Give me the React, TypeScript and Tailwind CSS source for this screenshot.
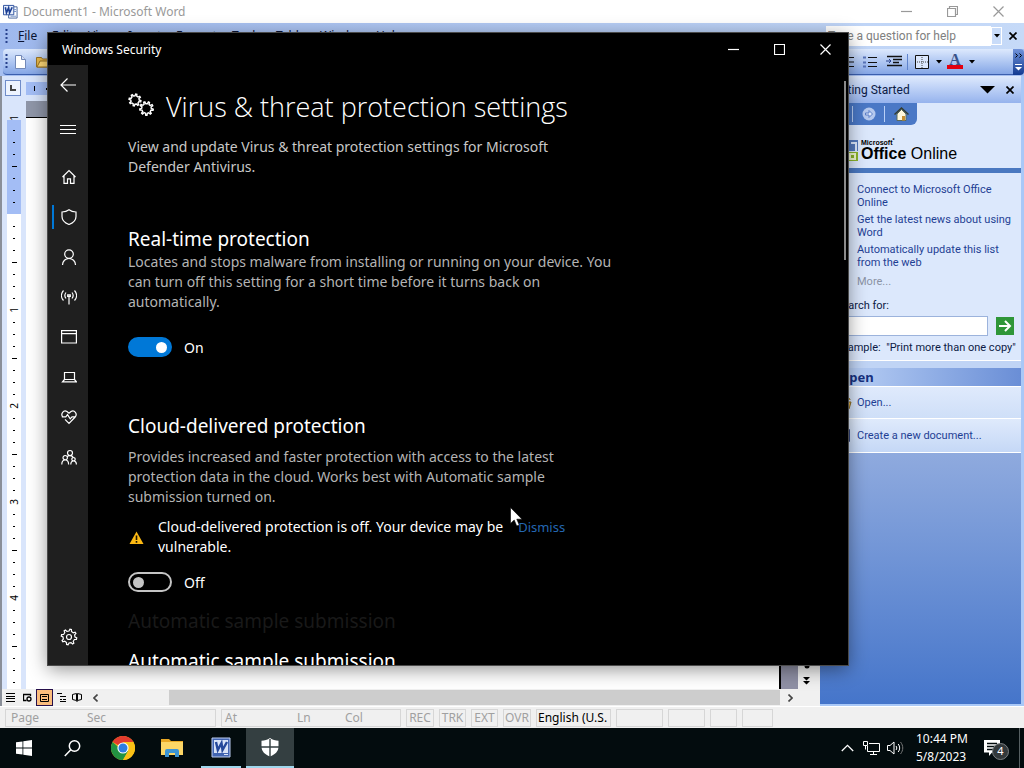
import React from 'react';

const strokeProps = { fill: 'none', stroke: 'currentColor', strokeWidth: 1.2 };

const gearPath = (cx: number, cy: number, inner: number, outer: number, teeth: number) => {
  const points: string[] = [];
  for (let i = 0; i < teeth; i++) {
    const steps: [number, number][] = [[0, inner], [0.15, outer], [0.4, outer], [0.55, inner]];
    steps.forEach(([offset, radius]) => {
      const a = ((i + offset) / teeth) * Math.PI * 2;
      points.push(`${(cx + Math.cos(a) * radius).toFixed(2)} ${(cy + Math.sin(a) * radius).toFixed(2)}`);
    });
  }
  return `M${points.join('L')}Z`;
};

const WordIcon: React.FC<{ size: number }> = ({ size }) => (
  <svg width={size} height={size} viewBox="0 0 16 16">
    <path d="M6 3h9v12H6z" fill="#fff" stroke="#44629c" />
    <path d="M12 6h2M12 8h2M8 13h6" stroke="#6d8dc8" />
    <path d="M.5 1.5h11v10H.5z" fill="#e9f0fc" stroke="#2b4f9e" />
    <path d="M2.5 3.5l1.2 6 2.3-5.5 1 5.5 2.8-6" fill="none" stroke="#1c3f94" strokeWidth="1.7" />
  </svg>
);

const TaskWordIcon = () => (
  <svg width="20" height="21" viewBox="0 0 20 21">
    <path d="M1 1h18v19H1z" fill="#4265b2" stroke="#bcccf0" />
    <path d="M3 3h14v13H3z" fill="#d9e3f8" />
    <path d="M5 5l1.8 8L10.500 6l1 7L16 5" fill="none" stroke="#25489b" strokeWidth="2.400" />
    <path d="M13 17.500h4" stroke="#dce6fa" />
  </svg>
);

const navItems = [
  {
    label: 'Home',
    icon: <path d="M1.500 8L8 1.600 14.500 8M3 7v7.400h3.500v-4.600h3v4.600H13V7" />,
  },
  {
    label: 'Virus & threat protection',
    icon: <path d="M8 .8C6 2.400 3.500 3 1 3v4.500c0 4 3 6.500 7 8 4-1.500 7-4 7-8V3c-2.500 0-5-.6-7-2.200z" />,
  },
  {
    label: 'Account protection',
    icon: <path d="M8 .8a4.300 4.300 0 100 8.600A4.300 4.300 0 008 .8zM1.500 16c0-4 3-6.500 6.500-6.500s6.500 2.500 6.500 6.500" />,
  },
  {
    label: 'Firewall & network protection',
    icon: <path d="M8 7v8.500M6.700 5.800h2.600v1.500H6.700zM5 3.500c-1.400 1.800-1.400 4.200 0 6M11 3.500c1.400 1.800 1.400 4.200 0 6M2.500 1.500c-2.700 3-2.700 7 0 10M13.500 1.500c2.700 3 2.700 7 0 10" />,
  },
  {
    label: 'App & browser control',
    icon: <path d="M.6 1.700h14.800v12.300H.6zM.6 4.700h14.800" />,
  },
  {
    label: 'Device security',
    icon: <path d="M3.500 3.500h10v7h-10zM3.500 10.500L1.500 12.800h14l-2-2.300" />,
  },
  {
    label: 'Device performance & health',
    icon: <path d="M1.800 8C-.8 4.600 2.600.6 6 2.500L8 4.200l2-1.700C13.400.6 16.800 4.600 14.200 8L8 14.500 4 10.400M.8 7.800h4L6.500 5.600l2.700 4.200 1.800-2h3.600" />,
  },
  {
    label: 'Family options',
    icon: (
      <path d="M9 1.500a2.500 2.500 0 100 5 2.500 2.500 0 000-5zM4.200 6.500a2.200 2.200 0 100 4.400 2.200 2.200 0 000-4.400zM12.500 8.500a1.700 1.700 0 100 3.400 1.700 1.700 0 000-3.400zM.8 15.500c0-6 6.800-6 6.800 0M9.800 15.500c0-4.700 5.600-4.700 5.600 0M6 8C6.600 6.400 11 5.600 12.300 8.500" />
    ),
  },
];

// one inch is eight 12px steps, the zero sits at the ninth
const rulerSteps = Array.from({ length: 48 }, (_, i) => i);

const menus = [
  { name: 'Edit', width: 'w-9' },
  { name: 'View', width: 'w-10' },
  { name: 'Insert', width: 'w-12' },
  { name: 'Format', width: 'w-14' },
  { name: 'Tools', width: 'w-11' },
  { name: 'Table', width: 'w-11' },
  { name: 'Window', width: 'w-14' },
  { name: 'Help', width: 'w-10' },
];

const Grip = () => (
  <svg width="3" height="15" viewBox="0 0 3 15" className="shrink-0">
    <path d="M1.500 0v15" stroke="#27408b" strokeWidth="2" strokeDasharray="2 2" />
  </svg>
);

const DownArrow = () => (
  <svg width="6" height="4" viewBox="0 0 6 4">
    <path d="M0 0h6L3 3.500z" fill="#000" />
  </svg>
);

const WordTitleBar = () => (
  <header className="flex h-[23px] items-center bg-white pl-[3px] text-[#999]">
    <WordIcon size={15} />
    <h1 className="ml-[5px] text-xs">Document1 - Microsoft Word</h1>
    <div className="ml-auto flex pr-[3px]">
      <button aria-label="Minimize Word" className="flex w-[46px] justify-center">
        <svg width="11" height="11" {...strokeProps}><path d="M0 5.500h11" /></svg>
      </button>
      <button aria-label="Restore Word" className="flex w-[46px] justify-center">
        <svg width="11" height="11" {...strokeProps}><path d="M.5 2.500h8v8h-8zM2.500 2.500v-2h8v8h-2" /></svg>
      </button>
      <button aria-label="Close Word" className="flex w-[46px] justify-center">
        <svg width="11" height="11" {...strokeProps}><path d="M.5.5l10 10M10.500.5l-10 10" /></svg>
      </button>
    </div>
  </header>
);

const WordMenuBar = () => (
  <nav className="flex h-[26px] items-center bg-linear-to-r from-[#9fb9ee] to-[#c6daf8] pl-[5px] text-xs text-[#0a1433]">
    <Grip />
    <button className="ml-[10px] w-[34px] text-left"><u>F</u>ile</button>
    {menus.map((menu) => (
      <button key={menu.name} className={`text-left ${menu.width}`}>{menu.name}</button>
    ))}
    <div className="ml-auto flex h-5 items-center">
      <input
        aria-label="Type a question for help"
        placeholder="Type a question for help"
        className="h-full w-[165px] bg-white pl-[2px] font-['Roboto'] text-xs placeholder:text-[#808080]"
      />
      <button aria-label="Recent questions" className="flex h-[18px] w-[11px] items-center justify-center border border-white bg-[#c9dcf9]">
        <DownArrow />
      </button>
      <button aria-label="Close document" className="flex w-[22px] justify-center">
        <svg width="8" height="8"><path d="M.5.5l7 7M7.500.5l-7 7" stroke="#000" strokeWidth="1.700" /></svg>
      </button>
    </div>
  </nav>
);

const WordToolbar = () => (
  <div className="flex h-[27px] bg-[#a6bff0] pl-[3px]">
    <div className="flex h-[26px] flex-1 items-center rounded-l border-b border-[#3b5fae] bg-linear-to-b from-[#dde9fd] to-[#85a6e6] pl-[2px]">
      <Grip />
      <button aria-label="New blank document" className="ml-[7px]">
        <svg width="11" height="14"><path d="M.5.5h6l4 4v9H.5z" fill="#fff" stroke="#7289b8" /><path d="M6.500.5v4h4" fill="#d4def2" stroke="#7289b8" /></svg>
      </button>
      <button aria-label="Open file" className="ml-[10px]">
        <svg width="16" height="13"><path d="M.5 12V2.500h5l1 1.500h6v8z" fill="#e8b84a" stroke="#9a7424" /><path d="M1 12l3-6h11l-3 6z" fill="#ffd977" stroke="#9a7424" /></svg>
      </button>
      <div className="ml-auto flex items-center pr-[38px]">
        <button aria-label="Numbering" className="mr-[9px]">
          <svg width="14" height="12"><path d="M5 1.500h9M5 6h9M5 10.500h9" stroke="#111" /><path d="M1.500 0v3M1.500 4.500v3M1.500 9v3" stroke="#27408b" /></svg>
        </button>
        <button aria-label="Bullets" className="mr-[9px]">
          <svg width="14" height="12"><path d="M5 1.500h9M5 6.500h9M5 10.500h9" stroke="#111" /><path d="M0 1.500h3M0 6.500h3M0 10.500h3" stroke="#5873b8" strokeWidth="2" /></svg>
        </button>
        <button aria-label="Increase indent" className="mr-[5px]">
          <svg width="16" height="13"><path d="M1 1.500h15M7 4.500h9M7 7.500h6M1 10.500h15" stroke="#111" strokeWidth="1.500" /><path d="M0 6h4M3 4l2 2-2 2" fill="none" stroke="#27408b" /></svg>
        </button>
        <span className="mr-[7px] h-4 w-px bg-[#5f83cc]" />
        <button aria-label="Borders" className="mr-[7px]">
          <svg width="14" height="14"><path d="M.5.5h13v13H.5z" fill="#dbe7fc" stroke="#111" /><path d="M7 2v11M2 7h11" stroke="#444" strokeDasharray="1 1" /></svg>
        </button>
        <DownArrow />
        <button aria-label="Font color" className="mr-[6px] ml-[5px] flex flex-col items-center">
          <b className="font-['Liberation_Serif'] text-base leading-[11px] text-[#3a5289]">A</b>
          <span className="h-1 w-4 bg-[#e3000f]" />
        </button>
        <DownArrow />
      </div>
    </div>
    <button aria-label="Toolbar options" className="flex h-[26px] w-[11px] flex-col items-center justify-between rounded-r bg-linear-to-b from-[#7193da] to-[#123a91] py-1">
      <svg width="8" height="5"><path d="M.5.5l2 2-2 2M4.500.5l2 2-2 2" fill="none" stroke="#000" /></svg>
      <svg width="7" height="7"><path d="M0 .5h7" stroke="#fff" /><path d="M0 3h7L3.500 6.500z" fill="#fff" /></svg>
    </button>
  </div>
);

const Document = () => (
  <section className="flex min-w-0 flex-1 flex-col border-l-2 border-[#8a8f99]">
    <div className="flex min-h-0 flex-1">
      <div className="flex w-6 flex-col bg-[#d9e5fb] pl-[3px]">
        <button aria-label="Left tab" className="mt-1 flex size-4 shrink-0 items-center justify-center border border-[#6f8cc9] bg-[#eef4ff]">
          <svg width="6" height="6"><path d="M1 0v5h5" fill="none" stroke="#444" strokeWidth="2" /></svg>
        </button>
        <div className="mt-4 ml-[2px] w-[14px] flex-1 overflow-hidden bg-[linear-gradient(#d9e5fb_8px,#a3bdf5_8px,#a3bdf5_102px,#fff_102px)]">
          {rulerSteps.map((step) => (
            <div key={step} className="flex h-3 items-center justify-center text-[10px] leading-3 text-black">
              {step % 8 === 0 && step !== 8 && (
                <span className="rotate-180 [writing-mode:vertical-rl]">{Math.abs(step / 8 - 1)}</span>
              )}
              {step % 8 === 4 && <span className="h-px w-[5px] bg-black" />}
              {step % 4 !== 0 && <span className="h-px w-[2px] bg-black" />}
            </div>
          ))}
        </div>
      </div>
      <div className="flex min-w-0 flex-1 flex-col">
        <div className="flex h-[25px] items-center gap-[11px] bg-[#d9e5fb]">
          <div className="flex h-[13px] flex-1 items-center gap-[11px] bg-[#a3bdf5] pl-2">
            <span className="h-[5px] w-px bg-black" />
            <span className="size-[2px] bg-black" />
          </div>
        </div>
        <div className="h-[17px] border-b border-black bg-[#8f96a8]" />
        <div className="flex flex-1">
          <div className="flex-1 border-r-2 border-black bg-white" />
          <div className="w-[17px] bg-[#8f90a5]" />
        </div>
      </div>
      <div className="flex w-[22px] flex-col items-center justify-end gap-2 bg-[#f0f0f0] pr-[5px] pb-1">
        <svg width="6" height="6"><circle cx="3" cy="3" r="2.500" fill="#000" /></svg>
        <svg width="7" height="8"><path d="M0 0h7L3.500 3.500zM0 4h7L3.500 7.500z" fill="#000" /></svg>
      </div>
    </div>
    <div className="flex h-[17px] items-center bg-[#f0f0f0]">
      <button aria-label="Normal view" className="flex w-4 justify-center">
        <svg width="9" height="9"><path d="M0 .5h9M0 3.500h9M0 5.500h9M0 8.500h9" stroke="#000" /></svg>
      </button>
      <button aria-label="Web layout view" className="flex w-[18px] justify-center">
        <svg width="9" height="9" fill="none" stroke="#000" strokeWidth="1.300"><path d="M7.500 3V1.500h-7v6h3" /><circle cx="6" cy="6" r="2" /></svg>
      </button>
      <button aria-label="Print layout view" className="flex size-[17px] items-center justify-center border border-[#27104b] bg-[#fbbd7d]">
        <svg width="9" height="8" fill="none" stroke="#000"><path d="M.5.5h8v7h-8zM2 2.500h5M2 5.500h5" /></svg>
      </button>
      <button aria-label="Outline view" className="flex w-4 justify-center">
        <svg width="9" height="9"><path d="M0 .5h5M3 3.500h6M3 6.500h2M6 6.500h3M3 8.500h6" stroke="#000" /></svg>
      </button>
      <button aria-label="Reading view" className="flex w-4 justify-center">
        <svg width="10" height="9" fill="none" stroke="#000"><path d="M.5 1.500L4.500.5v7l-4-1zM9.500 1.500l-4-1v7l4-1zM5 1v8" /></svg>
      </button>
      <button aria-label="Scroll left" className="flex w-5 justify-center">
        <svg width="5" height="8" fill="none" stroke="#444" strokeWidth="1.600"><path d="M4.500.5L1 4l3.500 3.500" /></svg>
      </button>
      <div className="ml-16 h-[15px] flex-1 bg-[#cdcdcd]" />
      <button aria-label="Scroll right" className="mr-5 flex w-5 justify-center">
        <svg width="5" height="8" fill="none" stroke="#444" strokeWidth="1.600"><path d="M.5.5L4 4 .5 7.500" /></svg>
      </button>
    </div>
  </section>
);

const TaskPane = () => (
  <aside className="flex w-[204px] flex-col border-r-[3px] border-b-2 border-[#a9c8f7] bg-[#dce8fc] font-['Roboto',sans-serif] text-[11px] leading-[13px] text-[#1f3f94]">
    <header className="flex h-[27px] items-center bg-linear-to-b from-[#dfeafd] to-[#96b3ed] pl-[9px] text-xs text-[#0d1b45]">
      <h2>Getting Started</h2>
      <div className="ml-auto flex items-center gap-[11px] pr-[7px]">
        <button aria-label="Other task panes">
          <svg width="15" height="8"><path d="M0 0h15L7.500 7.500z" fill="#000" /></svg>
        </button>
        <button aria-label="Close task pane">
          <svg width="8" height="8"><path d="M.5.5l7 7M7.500.5l-7 7" stroke="#000" strokeWidth="1.700" /></svg>
        </button>
      </div>
    </header>
    <div className="flex h-[22px] w-[97px] items-center rounded-br-md bg-[#4a78c6] pl-[32px]">
      <span className="h-4 w-px bg-[#b9d0f7]" />
      <button aria-label="Forward" className="ml-[9px]">
        <svg width="14" height="14"><circle cx="7" cy="7" r="6.500" fill="#b5c9ee" /><path d="M3.500 6H7V3.500L10.500 7 7 10.500V8H3.500z" fill="#dfe9fb" stroke="#5a7fc8" /></svg>
      </button>
      <span className="ml-2 h-4 w-px bg-[#b9d0f7]" />
      <button aria-label="Pane home" className="ml-[9px]">
        <svg width="15" height="14"><path d="M3 7l4.500-4.500L12 7v6.500H3z" fill="#fff8dd" stroke="#5d6a58" /><path d="M.5 7.500L7.500 1l7 6.500" fill="none" stroke="#343c30" strokeWidth="1.500" /><path d="M8 9h3v4.500H8z" fill="#c78f32" /></svg>
      </button>
    </div>
    <div className="mt-[14px] flex h-[29px] pl-[26px] text-black">
      <svg width="12" height="26" className="shrink-0">
        <path d="M1 1h11v11H1z" fill="#5379bd" />
        <path d="M5 4h5v8" fill="none" stroke="#dce8fc" strokeWidth="2" />
        <path d="M1 13h11v9H1z" fill="#8cb52c" />
        <path d="M4 15h5v5H4z" fill="none" stroke="#f0f7d0" strokeWidth="2" />
      </svg>
      <div className="ml-[3px] font-['Liberation_Sans']">
        <p className="text-[7px] leading-[7px] font-bold">Microsoft<sup>*</sup></p>
        <p className="text-base leading-4 whitespace-nowrap"><b>Office</b> Online</p>
      </div>
    </div>
    <div className="h-[5px] shrink-0 bg-[#4a78c0]" />
    <nav className="mt-[10px] flex flex-col gap-1 pl-[37px] whitespace-nowrap">
      <a href="#connect">Connect to Microsoft Office<br />Online</a>
      <a href="#news">Get the latest news about using<br />Word</a>
      <a href="#update">Automatically update this list<br />from the web</a>
      <a href="#more" className="mt-[2px] text-[#8b93a5]">More...</a>
    </nav>
    <div className="mt-[11px] flex flex-col pl-4 text-[#0d1b45]">
      <label htmlFor="pane-search">Search for:</label>
      <div className="mt-1 flex items-center">
        <input id="pane-search" className="h-5 min-w-0 flex-1 border border-[#9cb3dc] bg-white px-1" />
        <button aria-label="Search" className="mr-[7px] ml-2 flex size-[18px] items-center justify-center bg-[#2f9638]">
          <svg width="14" height="12" fill="none" stroke="#fff" strokeWidth="2"><path d="M1 6h11M7 1l5 5-5 5" /></svg>
        </button>
      </div>
      <p className="mt-[5px] whitespace-pre">Example:  "Print more than one copy"</p>
    </div>
    <div className="mt-[6px] h-[8px] border-t border-white bg-[#c0d4f5]" />
    <h3 className="border-b border-white bg-linear-to-r from-[#c4d8f8] to-[#6a8ed6] pl-[19px] font-['Noto_Sans'] text-[13px] leading-[18px] font-bold text-[#16307e]">Open</h3>
    <a href="#open" className="flex h-8 items-center border-b border-white bg-linear-to-b from-[#dfeafc] to-[#cfdff8]">
      <svg width="14" height="14" className="mr-[4px] ml-[19px]"><path d="M1 6h11l-2 7H2zM6 3c2-3 5-1 5 1" fill="#e8b84a" stroke="#8a6a20" /></svg>
      Open...
    </a>
    <a href="#create" className="flex h-[34px] items-center border-b border-white bg-linear-to-b from-[#dfeafc] to-[#c5d8f6]">
      <svg width="11" height="13" className="mr-[7px] ml-[19px]"><path d="M.5.5h10v12H.5z" fill="#fff" stroke="#33457c" /></svg>
      Create a new document...
    </a>
    <div className="flex-1 bg-linear-to-b from-[#8faade] to-[#4575ca]" />
  </aside>
);

const StatusBar = () => (
  <footer className="flex h-[22px] items-center gap-[5px] border-t border-white bg-[#f0f0f0] pt-px pl-[5px] text-xs whitespace-nowrap text-[#a0a0a0] [&>div]:h-[18px] [&>div]:border [&>div]:border-[#d6d6d6] [&>div]:leading-4">
    <div className="flex w-[211px] pl-[5px]"><span className="w-[76px]">Page</span><span>Sec</span></div>
    <div className="flex w-[180px] pl-[3px]"><span className="w-[72px]">At</span><span className="w-[48px]">Ln</span><span>Col</span></div>
    <div className="w-7 text-center">REC</div>
    <div className="w-[27px] text-center">TRK</div>
    <div className="w-[27px] text-center">EXT</div>
    <div className="w-7 text-center">OVR</div>
    <div className="w-[75px] overflow-hidden pl-px text-black">English (U.S.</div>
    <div className="w-[47px]" />
    <div className="w-[37px]" />
    <div className="w-[27px]" />
    <div className="w-[31px]" />
  </footer>
);

const Toggle: React.FC<{ id: string; on: boolean; name: string }> = ({ id, on, name }) => (
  <div className="flex h-5 items-center gap-3 text-sm text-white">
    <input
      id={id}
      type="checkbox"
      role="switch"
      aria-label={name}
      defaultChecked={on}
      className="flex h-5 w-11 appearance-none items-center rounded-full border-2 border-[#c4c4c4] px-[3px] before:size-[11px] before:rounded-full before:bg-[#c4c4c4] checked:justify-end checked:border-[#0078d7] checked:bg-[#0078d7] checked:before:bg-white"
    />
    <label htmlFor={id} className="pt-[2px]">{on ? 'On' : 'Off'}</label>
  </div>
);

const SecurityWindow = () => (
  <section className="absolute top-[33px] left-12 flex h-[632px] w-[800px] flex-col overflow-hidden bg-black text-white shadow-[0_4px_18px_rgba(0,0,0,0.45)] outline outline-[#4a4a4a]">
    <header className="flex h-8 shrink-0 items-center pt-px pl-[14px] text-xs">
      <h2>Windows Security</h2>
      <div className="ml-auto flex">
        <button aria-label="Minimize" className="flex w-[46px] justify-center">
          <svg width="11" height="11" {...strokeProps}><path d="M0 5.500h11" /></svg>
        </button>
        <button aria-label="Maximize" className="flex w-[46px] justify-center">
          <svg width="11" height="11" {...strokeProps}><path d="M.5.5h10v10H.5z" /></svg>
        </button>
        <button aria-label="Close" className="flex w-[46px] justify-center">
          <svg width="11" height="11" {...strokeProps}><path d="M.5.5l10 10M10.500.5l-10 10" /></svg>
        </button>
      </div>
    </header>
    <div className="flex min-h-0 flex-1">
      <nav className="flex w-10 shrink-0 flex-col bg-[#1f1f1f]">
        <button aria-label="Back" className="flex h-10 items-center justify-center">
          <svg width="16" height="14" {...strokeProps}><path d="M16 7H1M7.500.5L1 7l6.500 6.500" /></svg>
        </button>
        <button aria-label="Open navigation" className="mt-1 mb-2 flex h-10 items-center justify-center">
          <svg width="16" height="9" {...strokeProps}><path d="M0 .5h16M0 4.500h16M0 8.500h16" /></svg>
        </button>
        {navItems.map((item, i) => (
          <button
            key={item.label}
            aria-label={item.label}
            className="relative flex h-10 items-center justify-center pl-[2px]"
          >
            {i === 1 && <span className="absolute left-1 h-6 w-[2px] bg-[#0078d7]" />}
            <svg width="16" height="16" viewBox="0 0 16 16" {...strokeProps}>{item.icon}</svg>
          </button>
        ))}
        <button aria-label="Settings" className="mt-auto mb-2 flex h-10 items-center justify-center pl-[2px]">
          <svg width="18" height="18" viewBox="0 0 18 18" {...strokeProps}>
            <path d={gearPath(9, 9, 6, 7.8, 8)} />
            <circle cx="9" cy="9" r="2.500" />
          </svg>
        </button>
      </nav>
      <main className="relative min-w-0 flex-1 overflow-hidden px-10 pt-[22px] text-sm leading-5 text-[#b4b4b4]">
        <h1 className="flex items-center font-['Open_Sans'] text-[27px] leading-10 font-light text-white">
          <svg width="26" height="28" viewBox="0 0 26 28" className="mr-3" fill="none" stroke="currentColor" strokeWidth="1.400">
            <path d={gearPath(7, 7, 4.2, 6, 8)} />
            <path d={gearPath(18.5, 15.5, 4.8, 6.8, 9)} />
          </svg>
          Virus &amp; threat protection settings
        </h1>
        <p className="mt-[10px] text-[#c8c8c8]">
          View and update Virus &amp; threat protection settings for Microsoft<br />
          Defender Antivirus.
        </p>

        <h2 className="mt-[50px] text-[19px] leading-6 text-white">Real-time protection</h2>
        <p className="mt-px">
          Locates and stops malware from installing or running on your device. You<br />
          can turn off this setting for a short time before it turns back on<br />
          automatically.
        </p>
        <div className="mt-[25px]">
          <Toggle id="realtime" name="Real-time protection" on />
        </div>

        <h2 className="mt-[57px] text-[19px] leading-6 text-white">Cloud-delivered protection</h2>
        <p className="mt-[9px]">
          Provides increased and faster protection with access to the latest<br />
          protection data in the cloud. Works best with Automatic sample<br />
          submission turned on.
        </p>
        <div className="mt-[10px] flex text-white">
          <svg width="15" height="14" viewBox="0 0 15 14" className="mt-[14px] mr-[14px] ml-[1px]">
            <path d="M7.500.5L14.500 13H.5z" fill="#fcb913" />
            <path d="M7.500 4.500V9M7.500 10v1.800" stroke="#1c1300" strokeWidth="1.600" />
          </svg>
          <p>
            Cloud-delivered protection is off. Your device may be<br />
            vulnerable.
          </p>
          <a href="#dismiss" className="ml-[15px] self-start text-[13px] text-[#2467b3]">Dismiss</a>
        </div>
        <div className="mt-[15px]">
          <Toggle id="cloud" name="Cloud-delivered protection" on={false} />
        </div>

        <p aria-hidden="true" className="mt-[17px] text-[19px] leading-6 text-[#191919]">Automatic sample submission</p>
        <h2 className="mt-4 text-[19px] leading-6 text-white">Automatic sample submission</h2>
        <span className="absolute top-4 right-[2px] h-[179px] w-[2px] bg-[#8a8a8a]" />
      </main>
    </div>
  </section>
);

const Taskbar = () => (
  <footer className="flex h-10 shrink-0 items-center bg-[#030c0e] text-xs text-white">
    <button aria-label="Start" className="flex w-12 justify-center">
      <svg width="16" height="16" fill="#fff"><path d="M0 2.300l6.500-.9v6.200H0zM7.300 1.300L16 0v7.600H7.300zM0 8.400h6.500v6.200L0 13.700zM7.300 8.400H16V16l-8.700-1.300z" /></svg>
    </button>
    <button aria-label="Search Windows" className="mr-[3px] flex w-12 justify-center">
      <svg width="17" height="17" fill="none" stroke="#fff" strokeWidth="1.500"><circle cx="10.500" cy="6" r="5.200" /><path d="M6.800 9.700L.8 16" /></svg>
    </button>
    <button aria-label="Chrome" className="mr-px flex w-12 justify-center">
      <svg width="24" height="24" viewBox="0 0 24 24">
        <circle cx="12" cy="12" r="12" fill="#fbc116" />
        <path d="M12 12L1.600 6A12 12 0 0122.400 6z" fill="#e33b2e" />
        <path d="M1.600 6a12 12 0 0010.400 18l5.200-9H12z" fill="#229342" />
        <path d="M12 6h10.400A12 12 0 0112 24l5.200-9z" fill="#fbc116" />
        <circle cx="12" cy="12" r="5.600" fill="#fff" />
        <circle cx="12" cy="12" r="4.500" fill="#2f7de1" />
      </svg>
    </button>
    <button aria-label="File Explorer" className="mr-px flex w-12 justify-center">
      <svg width="22" height="20" viewBox="0 0 22 20">
        <path d="M0 1h8l2 2h12v14H0z" fill="#e9a824" />
        <path d="M0 4h22v13H0z" fill="#fcd666" />
        <path d="M4 19v-6a2 2 0 012-2h10a2 2 0 012 2v6h-4v-4H8v4z" fill="#3d94d4" />
      </svg>
    </button>
    <button aria-label="Word" className="mr-px flex h-10 w-12 flex-col items-center">
      <span className="flex flex-1 items-center"><TaskWordIcon /></span>
      <span className="h-[2px] w-10 bg-[#9fd6ec]" />
    </button>
    <button aria-label="Windows Security" className="flex h-10 w-12 flex-col items-center bg-[#343f41]">
      <span className="flex flex-1 items-center">
        <svg width="18" height="19" viewBox="0 0 18 19">
          <path d="M9 0C6.500 2 3.500 2.700.5 2.700V8.500c0 5 3.500 8 8.500 10 5-2 8.500-5 8.500-10V2.700C14.500 2.700 11.500 2 9 0z" fill="#fff" />
          <path d="M9 1v18M0 9h18" stroke="#343f41" strokeWidth="1.400" />
        </svg>
      </span>
      <span className="h-[2px] w-full bg-[#9fd6ec]" />
    </button>
    <div className="ml-auto flex items-center">
      <button aria-label="Show hidden icons">
        <svg width="13" height="8" fill="none" stroke="#fff" strokeWidth="1.300"><path d="M.8 7l5.700-5.700L12.200 7" /></svg>
      </button>
      <button aria-label="Network" className="ml-[9px]">
        <svg width="17" height="14" fill="none" stroke="#fff"><path d="M6 2.500h10.500v8H4.500V5M10.500 10.500v3M7 13.500h7M.5.500h4v4h-4zM2.500 4.500v4" /></svg>
      </button>
      <button aria-label="Volume" className="ml-[7px]">
        <svg width="17" height="14" fill="none" stroke="#fff"><path d="M.5 4.500h2.500L7 1v12L3 9.500H.5zM9 5c1 1.300 1 2.700 0 4M11.200 3c2 2.500 2 5.500 0 8" /><path d="M13.500 1c3 3.700 3 8.300 0 12" stroke="#777" /></svg>
      </button>
      <time className="ml-[12px] w-[50px] text-center leading-[18px] whitespace-nowrap">
        10:44 PM<br />5/8/2023
      </time>
      <button aria-label="4 notifications" className="relative ml-[18px] mr-[10px] h-6 w-[25px]">
        <svg width="17" height="17"><path d="M0 0h16v12.500H8L5 16v-3.500H0z" fill="#fff" /><path d="M3 3.500h10M3 6.500h10M3 9.500h7" stroke="#030c0e" strokeWidth="1.300" /></svg>
        <span className="absolute top-[7px] left-[8px] flex size-[17px] items-center justify-center rounded-full border border-[#7b8082] bg-[#33393b] text-[11px]">4</span>
      </button>
      <span className="mr-1 h-10 w-px bg-[#566062]" />
    </div>
  </footer>
);

const App: React.FC = () => {
  return (
    <div className="relative flex h-screen flex-col overflow-hidden bg-[#f0f0f0] font-['Noto_Sans',sans-serif]">
      <div className="flex min-h-0 flex-1 flex-col">
        <WordTitleBar />
        <WordMenuBar />
        <WordToolbar />
        <div className="flex min-h-0 flex-1">
          <Document />
          <TaskPane />
        </div>
        <StatusBar />
      </div>
      <Taskbar />
      <SecurityWindow />
      <svg width="13" height="20" viewBox="0 0 13 20" className="absolute top-[507px] left-[510px]">
        <path d="M.5.500v16l3.700-3.500 2.500 6 2.600-1.100-2.500-5.700H12z" fill="#fff" stroke="#000" strokeWidth=".6" />
      </svg>
    </div>
  );
};

export default App;
